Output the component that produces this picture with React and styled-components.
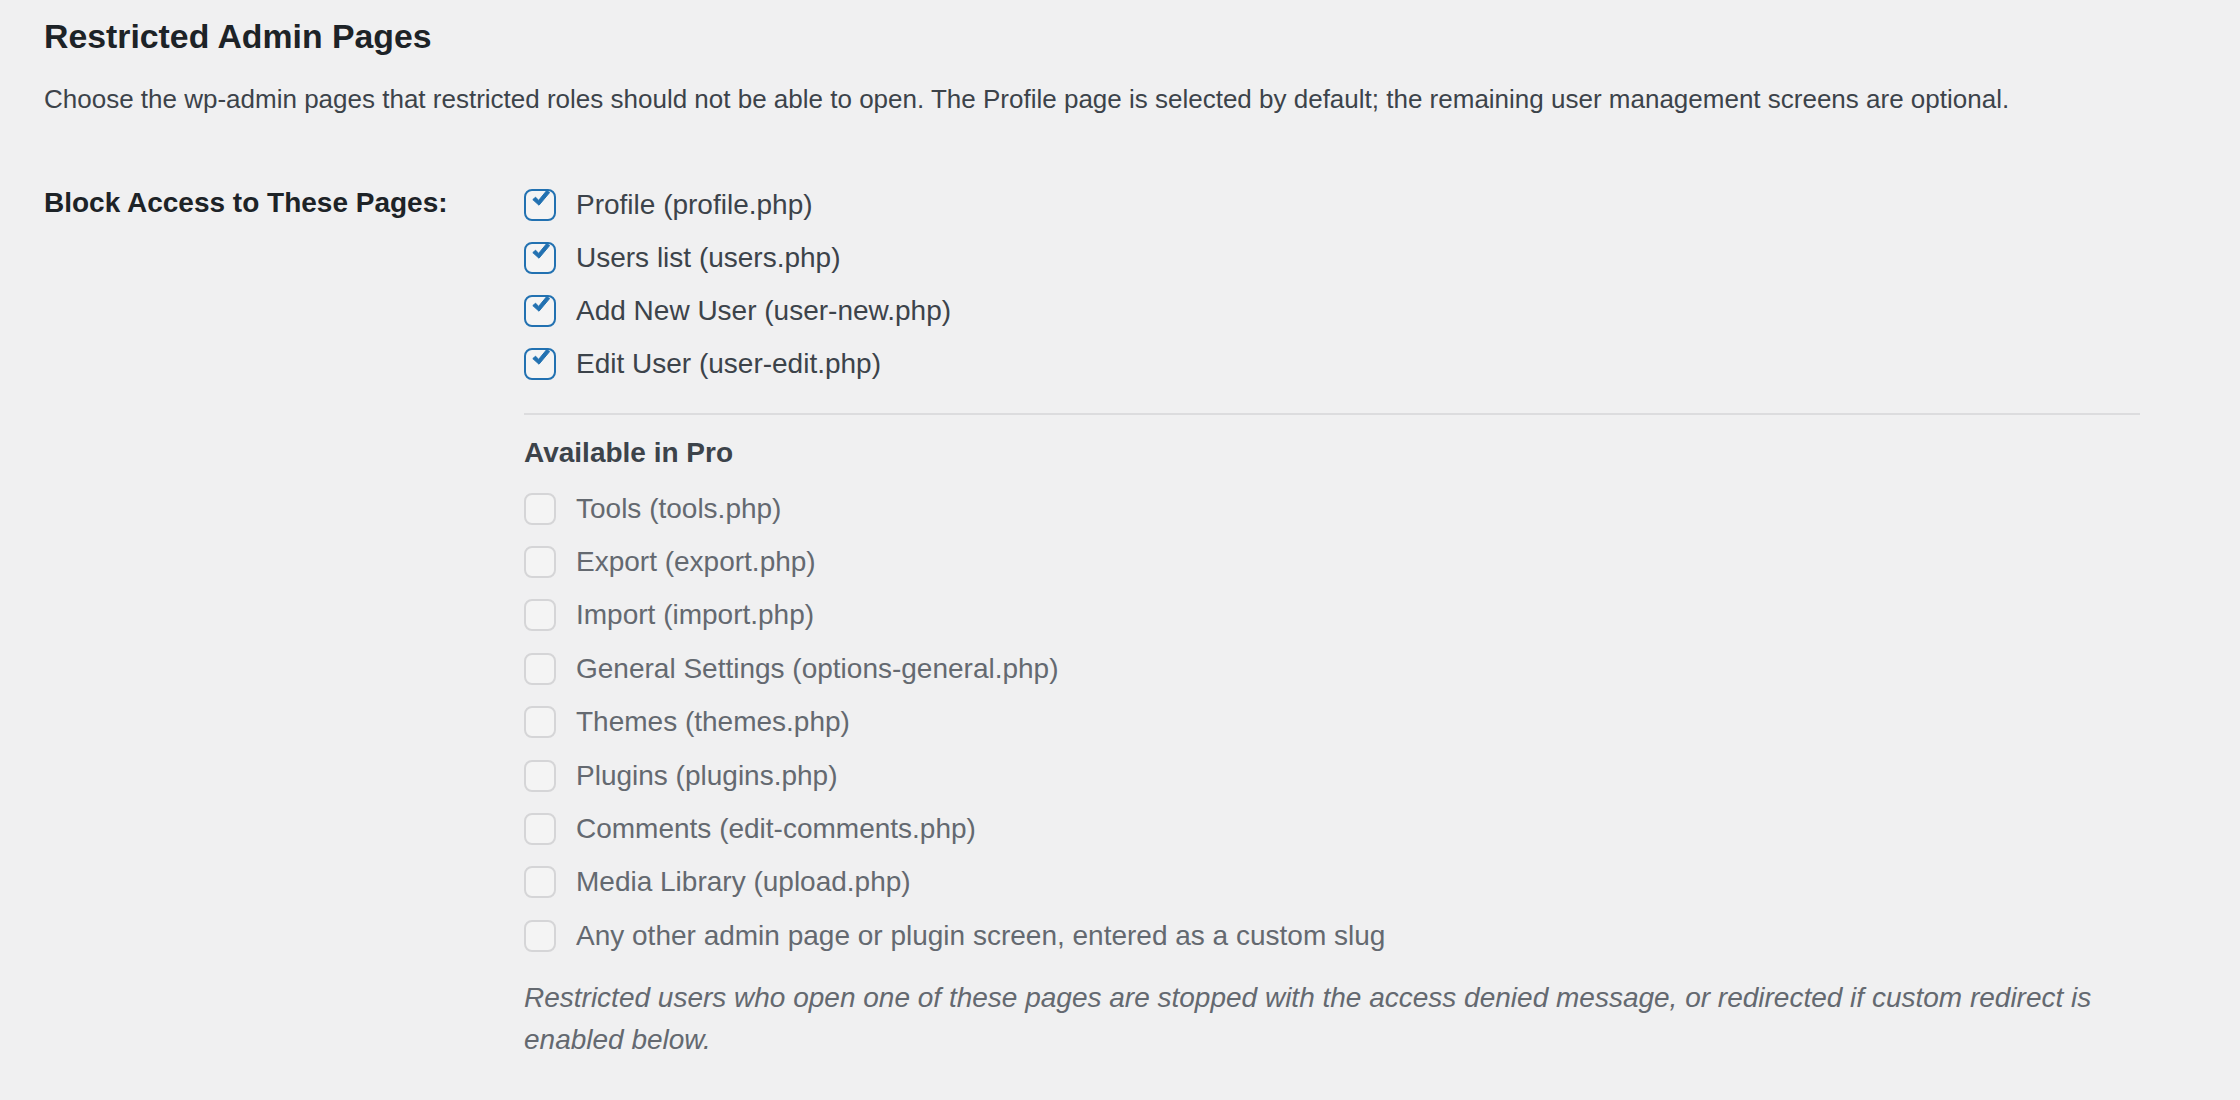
import styled, { createGlobalStyle } from "styled-components";

const GlobalStyle = createGlobalStyle`
  body {
    margin: 0;
    background: #f0f0f1;
    font-family: "Liberation Sans", Arial, sans-serif;
  }
`;

const Page = styled.div`
  box-sizing: border-box;
  min-height: 100vh;
  padding: 13.5px 44px 40px;
`;

const Title = styled.h2`
  margin: 0;
  font-size: 33.8px;
  line-height: 44px;
  font-weight: 700;
  color: #1d2327;
`;

const Intro = styled.p`
  margin: 22.5px 0 0;
  font-size: 26px;
  line-height: 39px;
  color: #3c434a;
`;

const FormTable = styled.div`
  display: grid;
  grid-template-columns: 480px 1616px;
  margin-top: 59px;
`;

const FieldLabel = styled.div`
  font-size: 28px;
  line-height: 50px;
  font-weight: 700;
  color: #1d2327;
`;

const Field = styled.div`
  display: flex;
  flex-direction: column;
`;

const OptionRow = styled.label`
  display: flex;
  align-items: center;
  gap: 20px;
  height: ${(p) => (p.$disabled ? "53.4px" : "53px")};
  font-size: 28px;
  color: ${(p) => (p.$disabled ? "#646970" : "#3c434a")};
`;

const Box = styled.span`
  box-sizing: border-box;
  flex: none;
  display: flex;
  align-items: flex-start;
  width: 32px;
  height: 32px;
  padding-left: 6px;
  border: 2px solid ${(p) => (p.$checked ? "#2271b1" : "#d5d5d7")};
  border-radius: 8px;
  background: rgba(255, 255, 255, 0.25);

  svg {
    margin-top: -1px;
  }
`;

const Divider = styled.div`
  height: 2px;
  margin-top: 23px;
  background: #dcdcde;
`;

const ProHeading = styled.div`
  margin-top: 17px;
  font-size: 28px;
  line-height: 42px;
  font-weight: 700;
  color: #3c434a;
`;

const ProList = styled.div`
  display: flex;
  flex-direction: column;
  margin-top: 8px;
`;

const Note = styled.p`
  margin: 14.5px 0 0;
  font-size: 28px;
  line-height: 42px;
  font-style: italic;
  color: #646970;
`;

const Check = () => (
  <svg width="18" height="16" viewBox="0 0 18 16">
    <path
      d="M0.8 9.6 L3.6 7.2 L6.6 10.4 L14.7 0.6 L17.6 2.6 L7 15.2 Z"
      fill="#2271b1"
      stroke="#2271b1"
      strokeWidth="1"
      strokeLinejoin="round"
    />
  </svg>
);

const blocked = [
  "Profile (profile.php)",
  "Users list (users.php)",
  "Add New User (user-new.php)",
  "Edit User (user-edit.php)",
];

const pro = [
  "Tools (tools.php)",
  "Export (export.php)",
  "Import (import.php)",
  "General Settings (options-general.php)",
  "Themes (themes.php)",
  "Plugins (plugins.php)",
  "Comments (edit-comments.php)",
  "Media Library (upload.php)",
  "Any other admin page or plugin screen, entered as a custom slug",
];

function Option({ label, checked, disabled }) {
  return (
    <OptionRow $disabled={disabled}>
      <Box $checked={checked} role="checkbox" aria-checked={checked}>
        {checked && <Check />}
      </Box>
      {label}
    </OptionRow>
  );
}

export default function App() {
  return (
    <Page>
      <GlobalStyle />
      <Title>Restricted Admin Pages</Title>
      <Intro>
        Choose the wp-admin pages that restricted roles should not be able to
        open. The Profile page is selected by default; the remaining user
        management screens are optional.
      </Intro>

      <FormTable>
        <FieldLabel>Block Access to These Pages:</FieldLabel>
        <Field>
          {blocked.map((label) => (
            <Option key={label} label={label} checked />
          ))}

          <Divider />
          <ProHeading>Available in Pro</ProHeading>

          <ProList>
            {pro.map((label) => (
              <Option key={label} label={label} disabled />
            ))}
          </ProList>

          <Note>
            Restricted users who open one of these pages are stopped with the
            access denied message, or redirected if custom redirect is enabled
            below.
          </Note>
        </Field>
      </FormTable>
    </Page>
  );
}
